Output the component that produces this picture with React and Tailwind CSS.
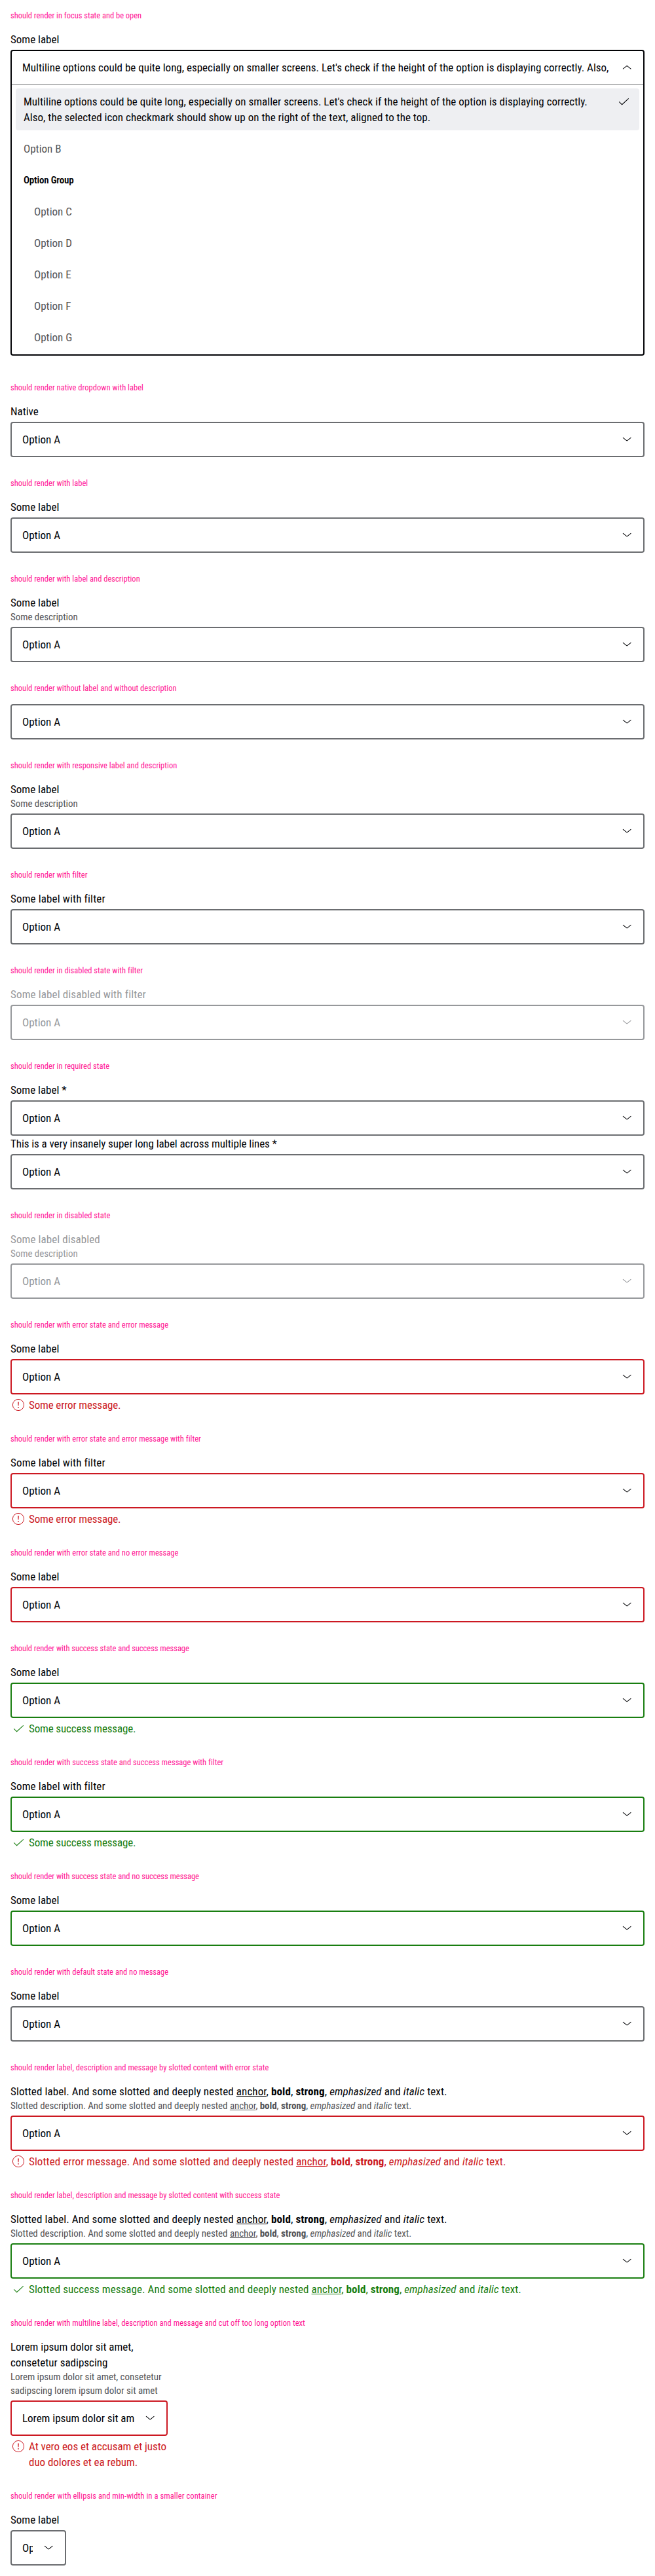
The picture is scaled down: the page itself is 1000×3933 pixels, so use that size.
import React from "react";

const LONG =
  "Multiline options could be quite long, especially on smaller screens. Let's check if the height of the option is displaying correctly. Also, the selected icon checkmark should show up on the right of the text, aligned to the top.";

const BORDER = {
  none: "border-[#6b6d70]",
  disabled: "border-[#96989b]",
  error: "border-[#cc1922]",
  success: "border-[#197e10]",
};

function Icon({ d }) {
  return (
    <svg viewBox="0 0 24 24" fill="none" stroke="currentColor" strokeWidth="1.05" className="size-6 shrink-0">
      <path d={d} />
    </svg>
  );
}

const ChevronDown = () => <Icon d="M6 9.2 L11.6 13.7 Q12.2 14.2 12.8 13.7 L18.4 9.2" />;
const ChevronUp = () => <Icon d="M6 14.4 L11.6 9.9 Q12.2 9.4 12.8 9.9 L18.4 14.4" />;
const Check = () => <Icon d="M5.2 12.4 L9.6 16.7 L19.7 7.3" />;

function Exclamation() {
  return (
    <svg viewBox="0 0 24 24" className="size-6 shrink-0" fill="none">
      <circle cx="12" cy="12" r="8.6" stroke="currentColor" strokeWidth="1" />
      <path d="M11.2 7.4h1.6l-.3 5.8h-1z" fill="currentColor" />
      <rect x="11.25" y="15" width="1.5" height="1.6" fill="currentColor" />
    </svg>
  );
}

function Rich({ lead }) {
  return (
    <>
      {lead} And some slotted and deeply nested <a className="underline decoration-1">anchor</a>, <b className="font-bold">bold</b>,{" "}
      <strong className="font-bold">strong</strong>, <em>emphasized</em> and <i>italic</i> text.
    </>
  );
}

function Select({
  label,
  labelClass = "",
  description,
  message,
  messageClass = "tracking-[-0.14px]",
  value = "Option A",
  state = "none",
  disabled,
  width = "w-full",
}) {
  const tone = disabled ? "text-[#96989b]" : "text-[#010205]";
  return (
    <div className={width}>
      {label && <div className={`leading-6 ${tone} ${labelClass}`}>{label}</div>}
      {description && (
        <div className={`text-[15px] leading-[21px] tracking-[-0.05px] ${disabled ? tone : "text-[#535457]"}`}>{description}</div>
      )}
      <div
        className={`flex h-[54px] items-center gap-3 rounded border-2 bg-white pl-4 pr-[13px] ${label ? "mt-1" : ""} ${BORDER[disabled ? "disabled" : state]} ${tone}`}
      >
        <span className="min-w-0 flex-1 overflow-hidden whitespace-nowrap leading-6">{value}</span>
        <ChevronDown />
      </div>
      {message && (
        <div className={`mt-1 flex gap-1 leading-6 ${state === "error" ? "text-[#cc1922]" : "text-[#197e10]"}`}>
          {state === "error" ? <Exclamation /> : <Check />}
          <span className={messageClass}>{message}</span>
        </div>
      )}
    </div>
  );
}

function Option({ children, inset = "pl-3" }) {
  return <li className={`py-2 pr-3 leading-6 text-[#535457] ${inset}`}>{children}</li>;
}

function OpenSelect() {
  return (
    <div className="pb-[9px] text-[#010205]">
      <div className="leading-6">Some label</div>
      <div className="mt-1 rounded border-2 border-[#010205] bg-white">
        <div className="flex h-[50px] items-center gap-3 pl-4 pr-[13px]">
          <span className="min-w-0 flex-1 overflow-hidden whitespace-nowrap leading-6">{LONG}</span>
          <ChevronUp />
        </div>
        <ul className="flex flex-col gap-2 border-t border-[#6b6d70] p-1.5">
          <li className="flex items-start gap-3 rounded bg-[#eeeff2] px-3 py-2 leading-6 tracking-[0.02px]">
            <span className="flex-1">{LONG}</span>
            <Check />
          </li>
          <Option>Option B</Option>
          <li className="px-3 py-2 text-[15px] font-semibold leading-6 tracking-[-0.18px]">Option Group</li>
          {["C", "D", "E", "F", "G"].map((k) => (
            <Option key={k} inset="pl-7">
              Option {k}
            </Option>
          ))}
        </ul>
      </div>
    </div>
  );
}

const WIDE = "tracking-[0.14px]";
const SLOTTED = "tracking-[0.1px]";

const sections = [
  ["should render native dropdown with label", [{ label: "Native" }]],
  ["should render with label", [{ label: "Some label" }]],
  ["should render with label and description", [{ label: "Some label", description: "Some description" }]],
  ["should render without label and without description", [{}]],
  ["should render with responsive label and description", [{ label: "Some label", description: "Some description" }]],
  ["should render with filter", [{ label: "Some label with filter", labelClass: WIDE }]],
  ["should render in disabled state with filter", [{ label: "Some label disabled with filter", labelClass: WIDE, disabled: true }]],
  [
    "should render in required state",
    [
      { label: "Some label *" },
      { label: "This is a very insanely super long label across multiple lines *", labelClass: "tracking-[-0.07px]" },
    ],
  ],
  [
    "should render in disabled state",
    [{ label: "Some label disabled", labelClass: "tracking-[0.09px]", description: "Some description", disabled: true }],
  ],
  ["should render with error state and error message", [{ label: "Some label", state: "error", message: "Some error message." }]],
  [
    "should render with error state and error message with filter",
    [{ label: "Some label with filter", labelClass: WIDE, state: "error", message: "Some error message." }],
  ],
  ["should render with error state and no error message", [{ label: "Some label", state: "error" }]],
  [
    "should render with success state and success message",
    [{ label: "Some label", state: "success", message: "Some success message." }],
    "tracking-[-0.03px]",
  ],
  [
    "should render with success state and success message with filter",
    [{ label: "Some label with filter", labelClass: WIDE, state: "success", message: "Some success message." }],
  ],
  [
    "should render with success state and no success message",
    [{ label: "Some label", state: "success" }],
    "tracking-[-0.03px]",
  ],
  ["should render with default state and no message", [{ label: "Some label" }]],
  [
    "should render label, description and message by slotted content with error state",
    [
      {
        label: <Rich lead="Slotted label." />,
        labelClass: SLOTTED,
        description: <Rich lead="Slotted description." />,
        state: "error",
        message: <Rich lead="Slotted error message." />,
        messageClass: "tracking-[0.07px]",
      },
    ],
  ],
  [
    "should render label, description and message by slotted content with success state",
    [
      {
        label: <Rich lead="Slotted label." />,
        labelClass: SLOTTED,
        description: <Rich lead="Slotted description." />,
        state: "success",
        message: <Rich lead="Slotted success message." />,
        messageClass: "tracking-[0.07px]",
      },
    ],
  ],
  [
    "should render with multiline label, description and message and cut off too long option text",
    [
      {
        label: "Lorem ipsum dolor sit amet, consetetur sadipscing",
        description: "Lorem ipsum dolor sit amet, consetetur sadipscing lorem ipsum dolor sit amet",
        value: "Lorem ipsum dolor sit amet, consetetur sadipscing",
        state: "error",
        message: "At vero eos et accusam et justo duo dolores et ea rebum.",
        messageClass: "tracking-[-0.03px]",
        width: "w-60",
      },
    ],
  ],
  [
    "should render with ellipsis and min-width in a smaller container",
    [{ label: "Some label", width: "w-[85px] whitespace-nowrap" }],
    "tracking-[0.08px]",
  ],
];

function Title({ children, spacing = "mt-8", tracking = "tracking-[0.02px]" }) {
  return <h3 className={`mb-4 text-[12.5px] leading-4 text-[#ff1493] ${spacing} ${tracking}`}>{children}</h3>;
}

export default function App() {
  return (
    <main className="min-h-[3933px] bg-white p-4 font-['Roboto_Condensed','Roboto',sans-serif] text-[17px]">
      <Title spacing="mt-0" tracking="tracking-[-0.02px]">
        should render in focus state and be open
      </Title>
      <OpenSelect />
      {sections.map(([title, items, tracking]) => (
        <section key={title}>
          <Title tracking={tracking}>{title}</Title>
          {items.map((item, i) => (
            <Select key={i} {...item} />
          ))}
        </section>
      ))}
    </main>
  );
}
